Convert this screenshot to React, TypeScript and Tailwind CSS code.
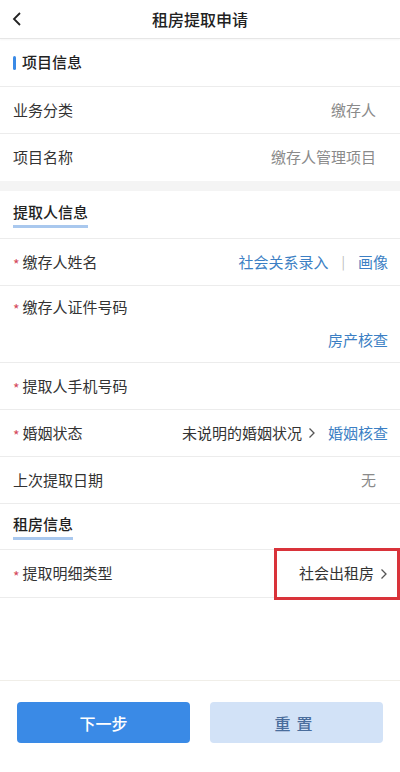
import React from 'react';

const font = { fontFamily: '"Noto Sans CJK SC", "Noto Sans", sans-serif' };

const Star: React.FC = () => (
  <span className="mr-[3px] translate-y-[2px] text-[14px] leading-none text-[#d4485a]">*</span>
);

const Row: React.FC<{ label: string; required?: boolean; children?: React.ReactNode }> = ({ label, required, children }) => (
  <div className="flex h-[47px] items-center justify-between border-b border-[#ececec] pl-[13px] pr-[24px]">
    <div className="flex items-center text-[15px] text-[#333]">
      {required && <Star />}
      {label}
    </div>
    {children}
  </div>
);

const Chevron: React.FC = () => (
  <svg className="ml-[6px] h-[12px] w-[8px]" viewBox="0 0 8 12" fill="none">
    <path d="M1.5 1.5 6 6l-4.5 4.5" stroke="#555" strokeWidth="1.3" />
  </svg>
);

const App: React.FC = () => {
  return (
    <div className="flex h-[772px] w-[400px] flex-col bg-white" style={font}>
      {/* Header */}
      <div className="relative flex h-[39px] items-center justify-center border-b border-[#e6e6e6] shadow-[0_1px_2px_rgba(0,0,0,0.04)]">
        <svg className="absolute left-[12px] top-[11px] h-[16px] w-[10px]" viewBox="0 0 10 16" fill="none">
          <path d="M8 2 2 8l6 6" stroke="#222" strokeWidth="1.8" />
        </svg>
        <span className="text-[16px] font-medium text-[#222]">租房提取申请</span>
      </div>

      {/* 项目信息 */}
      <div className="flex h-[48px] items-center border-b border-[#ececec] pl-[13px]">
        <span className="mr-[6px] h-[14px] w-[3px] rounded-sm bg-[#3a8ae6]" />
        <span className="text-[15px] font-medium text-[#222]">项目信息</span>
      </div>
      <Row label="业务分类">
        <span className="text-[15px] text-[#8a8a8a]">缴存人</span>
      </Row>
      <div className="flex h-[47px] items-center justify-between pl-[13px] pr-[24px]">
        <span className="text-[15px] text-[#333]">项目名称</span>
        <span className="text-[15px] text-[#8a8a8a]">缴存人管理项目</span>
      </div>
      <div className="h-[10px] bg-[#f4f4f4]" />

      {/* 提取人信息 */}
      <div className="flex h-[48px] items-center border-b border-[#ececec] pl-[13px]">
        <div className="flex flex-col">
          <span className="text-[15px] font-medium text-[#222]">提取人信息</span>
          <span className="mt-[2px] h-[3px] w-full bg-[#a9c8ee]" />
        </div>
      </div>
      <Row label="缴存人姓名" required>
        <div className="mr-[-12px] flex items-center text-[15px] text-[#3c7fc4]">
          <span>社会关系录入</span>
          <span className="mx-[13px] text-[13px] text-[#b9b9b9]">|</span>
          <span>画像</span>
        </div>
      </Row>
      <div className="flex h-[77px] flex-col border-b border-[#ececec] pl-[13px] pr-[12px]">
        <div className="flex items-center pt-[10px] text-[15px] text-[#333]">
          <Star />
          缴存人证件号码
        </div>
        <div className="mt-[10px] text-right text-[15px] text-[#3c7fc4]">房产核查</div>
      </div>
      <Row label="提取人手机号码" required />
      <div className="flex h-[47px] items-center justify-between border-b border-[#ececec] pl-[13px] pr-[12px]">
        <div className="flex items-center text-[15px] text-[#333]">
          <Star />
          婚姻状态
        </div>
        <div className="flex items-center text-[15px]">
          <span className="text-[#333]">未说明的婚姻状况</span>
          <Chevron />
          <span className="ml-[12px] text-[#3c7fc4]">婚姻核查</span>
        </div>
      </div>
      <Row label="上次提取日期">
        <span className="text-[15px] text-[#8a8a8a]">无</span>
      </Row>

      {/* 租房信息 */}
      <div className="flex h-[46px] items-center border-b border-[#ececec] pl-[13px]">
        <div className="flex flex-col">
          <span className="text-[15px] font-medium text-[#222]">租房信息</span>
          <span className="mt-[2px] h-[3px] w-full bg-[#a9c8ee]" />
        </div>
      </div>
      <div className="flex h-[48px] items-center justify-between border-b border-[#ececec] pl-[13px]">
        <div className="flex items-center text-[15px] text-[#333]">
          <Star />
          提取明细类型
        </div>
        <div className="relative flex h-[52px] w-[126px] items-center justify-end border-[3px] border-[#d9333a] pr-[9px] text-[15px] text-[#333]">
          社会出租房
          <Chevron />
        </div>
      </div>

      <div className="flex-1" />

      {/* Footer buttons */}
      <div className="flex h-[92px] items-start gap-[20px] border-t border-[#f0eee8] px-[17px] pt-[21px]">
        <button className="h-[41px] flex-1 rounded-[4px] bg-[#3a8ae6] text-[16px] font-medium text-white">下一步</button>
        <button className="h-[41px] flex-1 rounded-[4px] bg-[#d2e2f7] text-[16px] font-medium tracking-[6px] text-[#4a6d9c]">重置</button>
      </div>
    </div>
  );
};

export default App;
